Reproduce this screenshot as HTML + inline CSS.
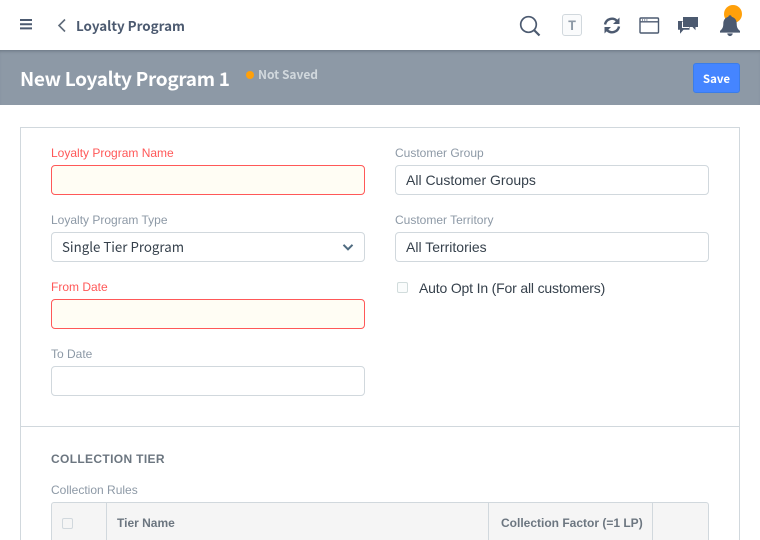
<!DOCTYPE html>
<html>
<head>
<meta charset="utf-8">
<style>
html,body{margin:0;padding:0;width:760px;height:540px;overflow:hidden;background:#fff}
body{position:relative;font-family:"Liberation Sans",sans-serif;color:#36414c}
.a{position:absolute;white-space:nowrap}
.n{font-family:"Noto Sans CJK SC","Noto Sans CJK JP",sans-serif}
.lab{font-size:12px;line-height:14px;color:#8d99a6}
.req{color:#ff5858}
.inp{position:absolute;box-sizing:border-box;height:30px;border:1px solid #d1d8dd;border-radius:4px;background:#fff;font-size:14px;line-height:28px;padding-left:10px;color:#36414c}
.err{background:#fffdf4;border-color:#ff5858}
</style>
</head>
<body>
<!-- top bar -->
<div class="a" style="left:0;top:0;width:760px;height:50px;background:#fff"></div>
<svg class="a" style="left:20px;top:19px" width="12" height="11" viewBox="0 0 12 11"><path d="M0 1h12M0 5.200h12M0 9.400h12" stroke="#4c5a70" stroke-width="2"/></svg>
<svg class="a" style="left:57px;top:18px" width="10" height="15" viewBox="0 0 10 15"><path d="M8 1.500 2 7.500 8 13.500" fill="none" stroke="#5f6b7a" stroke-width="1.600"/></svg>
<div class="a n" style="left:76px;top:15px;font-size:13.400px;line-height:20px;font-weight:700;color:#4c5a70">Loyalty Program</div>

<svg class="a" style="left:519px;top:15px" width="22" height="22" viewBox="0 0 22 22"><circle cx="9.500" cy="9.500" r="7.800" fill="none" stroke="#4c5a70" stroke-width="1.700"/><path d="M15 15l5.500 5.500" stroke="#4c5a70" stroke-width="2.200"/></svg>
<div class="a n" style="left:562px;top:14px;width:20px;height:22px;box-sizing:border-box;border:1px solid #d1d8dd;border-radius:3px;background:#fafbfc;text-align:center;font-size:13px;line-height:20px;font-weight:700;color:#8d99a6">T</div>
<svg class="a" style="left:603px;top:16px" width="18" height="19" viewBox="0 0 18 19"><path d="M2 8.500A7 7 0 0 1 14 5" fill="none" stroke="#4c5a70" stroke-width="2.400"/><path d="M16.500 1.500v6.500h-6.500z" fill="#4c5a70"/><path d="M16 10.500A7 7 0 0 1 4 14" fill="none" stroke="#4c5a70" stroke-width="2.400"/><path d="M1.500 17.500v-6.500h6.500z" fill="#4c5a70"/></svg>
<svg class="a" style="left:639px;top:17px" width="21" height="17" viewBox="0 0 21 17"><rect x="1" y="1" width="18.500" height="15" rx="1" fill="none" stroke="#4c5a70" stroke-width="1.400"/><path d="M1 4.800h18.500" stroke="#4c5a70" stroke-width="1.300"/><path d="M3 3h1M5.200 3h1M7.400 3h1" stroke="#4c5a70" stroke-width="1.200"/></svg>
<svg class="a" style="left:678px;top:17px" width="20" height="17" viewBox="0 0 20 17"><path d="M0 4h11.500v8.800H5.500L2 16.800v-4H0z" fill="#4c5a70"/><path d="M5 0h15v10h-2.500v3.200L14.500 10H5z" fill="#4c5a70"/><path d="M4.500 4.500v6h6.500" fill="none" stroke="#fff" stroke-width="1"/></svg>
<div class="a" style="left:724px;top:5px;width:18px;height:18px;border-radius:50%;background:#ffa00a"></div>
<svg class="a" style="left:719px;top:14px" width="22" height="23" viewBox="0 0 22 23"><path d="M11 1.200c1 0 1.700.7 1.700 1.700 3.500.8 5 3.700 5 6.700 0 3.800 1 5.300 3.300 7.300v1.700H1V16.900c2.300-2 3.300-3.500 3.300-7.300 0-3 1.500-5.900 5-6.700C9.300 1.900 10 1.200 11 1.200z" fill="#4c5a70"/><path d="M8.300 19.400h5.400a2.700 2.700 0 0 1-5.400 0z" fill="#4c5a70"/></svg>

<!-- page head -->
<div class="a" style="left:0;top:50px;width:760px;height:55px;background:#8d99a6;box-shadow:inset 0 3px 3px -2px rgba(60,70,85,.45)"></div>
<div class="a n" style="left:20px;top:65px;font-size:19px;line-height:28px;font-weight:700;letter-spacing:-.3px;color:#fff">New Loyalty Program 1</div>
<div class="a" style="left:246px;top:71px;width:8px;height:8px;border-radius:50%;background:#ffa00a"></div>
<div class="a n" style="left:258px;top:66px;font-size:12px;line-height:17px;font-weight:700;color:#d1d8dd">Not Saved</div>
<div class="a n" style="left:693px;top:63px;width:47px;height:30px;box-sizing:border-box;border:1px solid #3b7de8;border-radius:3px;background:#4585ff;color:#fff;font-size:11.500px;line-height:30px;font-weight:700;text-align:center">Save</div>

<!-- form card -->
<div class="a" style="left:20px;top:127px;width:720px;height:440px;box-sizing:border-box;border:1px solid #d1d8dd;background:#fff"></div>
<div class="a" style="left:21px;top:426px;width:718px;height:1px;background:#d1d8dd"></div>

<div class="a lab req" style="left:51px;top:146px">Loyalty Program Name</div>
<div class="inp err" style="left:51px;top:165px;width:314px"></div>

<div class="a lab" style="left:51px;top:213px">Loyalty Program Type</div>
<div class="inp n" style="left:51px;top:232px;width:314px;font-size:13.300px">Single Tier Program</div>
<svg class="a" style="left:342px;top:243px" width="12" height="9" viewBox="0 0 12 9"><path d="M1.500 1.800 6 6.300 10.500 1.800" fill="none" stroke="#4f6b80" stroke-width="2"/></svg>

<div class="a lab req" style="left:51px;top:280px">From Date</div>
<div class="inp err" style="left:51px;top:299px;width:314px"></div>

<div class="a lab" style="left:51px;top:347px">To Date</div>
<div class="inp" style="left:51px;top:366px;width:314px"></div>

<div class="a lab" style="left:395px;top:146px">Customer Group</div>
<div class="inp" style="left:395px;top:165px;width:314px">All Customer Groups</div>

<div class="a lab" style="left:395px;top:213px">Customer Territory</div>
<div class="inp" style="left:395px;top:232px;width:314px">All Territories</div>

<div class="a" style="left:397px;top:282px;width:11px;height:11px;box-sizing:border-box;border:1px solid #d1dcdc;border-radius:2px;background:#fafcfc"></div>
<div class="a" style="left:419px;top:280px;font-size:14px;letter-spacing:-.17px;line-height:16px;color:#36414c">Auto Opt In (For all customers)</div>

<div class="a" style="left:51px;top:452px;font-size:12px;line-height:15px;font-weight:700;letter-spacing:.35px;color:#6c7680">COLLECTION TIER</div>
<div class="a lab" style="left:51px;top:483px">Collection Rules</div>

<!-- table -->
<div class="a" style="left:51px;top:502px;width:658px;height:60px;box-sizing:border-box;border:1px solid #d1d8dd;border-radius:3px 3px 0 0;background:#f5f5f5"></div>
<div class="a" style="left:106px;top:503px;width:1px;height:40px;background:#d1d8dd"></div>
<div class="a" style="left:488px;top:503px;width:1px;height:40px;background:#d1d8dd"></div>
<div class="a" style="left:652px;top:503px;width:1px;height:40px;background:#d1d8dd"></div>
<div class="a" style="left:62px;top:518px;width:11px;height:11px;box-sizing:border-box;border:1px solid #d1d8dd;border-radius:2px;background:#f5f5f5"></div>
<div class="a" style="left:117px;top:516px;font-size:12px;line-height:15px;font-weight:700;color:#6c7680">Tier Name</div>
<div class="a" style="left:501px;top:516px;font-size:12px;line-height:15px;font-weight:700;color:#6c7680">Collection Factor (=1 LP)</div>
</body>
</html>
